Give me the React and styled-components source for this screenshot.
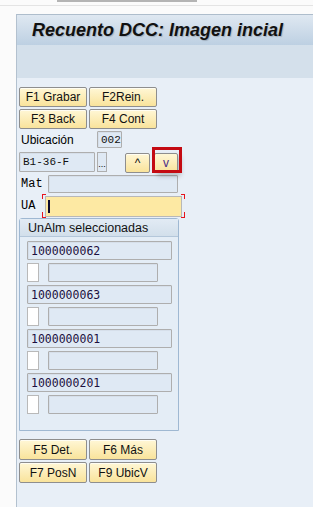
import styled, { createGlobalStyle } from "styled-components";

const GlobalStyle = createGlobalStyle`
    html, body {
        margin: 0;
        padding: 0;
        background: #fbfbfb;
    }
    #root {
        min-height: 100vh;
    }
`;

const Page = styled.div`
    display: flex;
    flex-direction: column;
    height: 507px;
    font-family: "Liberation Sans", Arial, sans-serif;
    font-size: 12px;
    color: #000;
`;

const TopStrip = styled.div`
    height: 14px;
    flex-shrink: 0;
`;

const Thumb = styled.div`
    margin-left: 57px;
    width: 140px;
    height: 2px;
    background: #b4b4b4;
`;

const TopLine = styled.div`
    margin-top: 3px;
    height: 1px;
    background: #e4e4e4;
`;

const Panel = styled.div`
    flex: 1;
    margin-left: 16px;
    border-left: 1px solid #b3c1cf;
    border-top: 1px solid #aebdcc;
    background: #e8eff7;
    display: flex;
    flex-direction: column;
`;

const Header = styled.div`
    height: 30px;
    display: flex;
    align-items: center;
    padding-left: 15px;
    background: linear-gradient(#dfe8f1, #bdd0e2);
`;

const Title = styled.h1`
    margin: 0;
    font-size: 18px;
    font-weight: bold;
    font-style: italic;
    color: #111;
    text-shadow: 1px 1px 1px rgba(0, 0, 0, 0.18);
`;

const Band = styled.div`
    height: 33px;
    background: #d4e0eb;
`;

const Content = styled.div`
    padding: 9px 0 0 2px;
    display: flex;
    flex-direction: column;
`;

const ButtonGrid = styled.div`
    display: grid;
    grid-template-columns: 68px 68px;
    gap: 2px;
    margin-top: ${(p) => p.$top || 0}px;
`;

const Key = styled.button`
    box-sizing: border-box;
    height: ${(p) => p.$h || "20px"};
    padding: 0;
    border: 1px solid #8e8e8e;
    border-radius: 2px;
    background: linear-gradient(#fff7d6, #f9e39b);
    font-family: "Liberation Sans", Arial, sans-serif;
    font-size: 12px;
    color: #111;
    box-shadow: inset 0 1px 0 #fffdf2;
    cursor: pointer;
`;

const Row = styled.div`
    display: flex;
    align-items: center;
    height: ${(p) => p.$h || 20}px;
    margin-top: ${(p) => p.$top || 0}px;
`;

const Label = styled.span`
    width: ${(p) => p.$w}px;
    padding-left: 2px;
    box-sizing: border-box;
    font-family: ${(p) =>
        p.$mono ? '"Liberation Mono", "Courier New", monospace' : '"Liberation Sans", Arial, sans-serif'};
    font-size: 12px;
    flex-shrink: 0;
`;

const Field = styled.div`
    box-sizing: border-box;
    width: ${(p) => p.$w}px;
    height: ${(p) => p.$h || 20}px;
    margin-left: ${(p) => p.$ml || 0}px;
    border: 1px solid #aeaeae;
    border-radius: 1px;
    background: #dfe9f4;
    box-shadow: inset 1px 1px 0 rgba(0, 0, 0, 0.04);
    padding-left: 3px;
    display: flex;
    align-items: center;
    font-family: ${(p) =>
        p.$sans ? '"DejaVu Sans Mono", monospace' : '"Liberation Mono", "Courier New", monospace'};
    font-size: ${(p) => (p.$sans ? "11.5px" : "11px")};
    color: ${(p) => (p.$sans ? "#1c1040" : "#111")};
    flex-shrink: 0;
`;

const Ellipsis = styled.div`
    box-sizing: border-box;
    width: 10px;
    height: 20px;
    margin-left: 2px;
    border: 1px solid #aeaeae;
    background: #dfe9f4;
    display: flex;
    align-items: flex-end;
    justify-content: center;
    font-size: 9px;
    line-height: 14px;
`;

const ArrowKey = styled(Key)`
    width: 25px;
    height: 20px;
    margin-left: ${(p) => p.$ml}px;
    margin-top: 1px;
    position: relative;

    ${(p) =>
        p.$focused &&
        `
        width: 24px;
        color: #4a2c86;
        box-shadow: 3px 3px 5px rgba(0, 0, 0, 0.22);
        &::after {
            content: "";
            position: absolute;
            left: -3px;
            top: -7px;
            right: -5px;
            bottom: -1px;
            border: 3px solid #c40a12;
            pointer-events: none;
        }
    `}
`;

const InputWrap = styled.div`
    position: relative;
    margin-left: 4px;
    padding: 2px 3px 1px 3px;

    &::before {
        content: "";
        position: absolute;
        inset: 0;
        pointer-events: none;
        background:
            linear-gradient(#e8141c, #e8141c) left top / 1px 5px no-repeat,
            linear-gradient(#e8141c, #e8141c) left top / 4px 1px no-repeat,
            linear-gradient(#e8141c, #e8141c) right top / 1px 5px no-repeat,
            linear-gradient(#e8141c, #e8141c) right top / 4px 1px no-repeat,
            linear-gradient(#e8141c, #e8141c) left bottom / 1px 6px no-repeat,
            linear-gradient(#e8141c, #e8141c) left bottom / 4px 1px no-repeat,
            linear-gradient(#e8141c, #e8141c) right bottom / 1px 6px no-repeat,
            linear-gradient(#e8141c, #e8141c) right bottom / 4px 1px no-repeat;
    }
`;

const YellowInput = styled.div`
    box-sizing: border-box;
    width: 137px;
    height: 21px;
    border: 1px solid #b8b8b8;
    background: #fde9a3;
    display: flex;
    align-items: center;
    padding-left: 2px;
`;

const Caret = styled.span`
    width: 2px;
    height: 13px;
    background: #0a0a30;
`;

const Group = styled.section`
    box-sizing: border-box;
    width: 160px;
    padding: 0 0 16px 0;
    border: 1px solid #9fb8d2;
    border-radius: 3px 3px 0 0;
    background: #e4edf6;
`;

const GroupTitle = styled.div`
    height: 17px;
    padding-left: 8px;
    display: flex;
    align-items: center;
    background: linear-gradient(#e2ebf4, #d2dfeb);
    border-bottom: 1px solid #b4c7da;
    font-size: 12.5px;
    color: #111;
`;

const GroupBody = styled.div`
    padding: 4px 0 0 7px;
    display: flex;
    flex-direction: column;
    gap: 3px;
`;

const Entry = styled.div`
    display: flex;
    flex-direction: column;
    gap: 3px;
`;

const EntryRow = styled.div`
    display: flex;
    align-items: center;
    height: 19px;
`;

const Check = styled.div`
    box-sizing: border-box;
    width: 12px;
    height: 19px;
    border: 1px solid #b9b9b9;
    background: #fff;
`;

const units = ["1000000062", "1000000063", "1000000001", "1000000201"];

const App = () => {
    return (
        <>
            <GlobalStyle />
            <Page>
                <TopStrip>
                    <Thumb />
                    <TopLine />
                </TopStrip>
                <Panel>
                    <Header>
                        <Title>Recuento DCC: Imagen incial</Title>
                    </Header>
                    <Band />
                    <Content>
                        <ButtonGrid>
                            <Key>F1 Grabar</Key>
                            <Key>F2Rein.</Key>
                            <Key>F3 Back</Key>
                            <Key>F4 Cont</Key>
                        </ButtonGrid>

                        <Row $h={17} $top={2}>
                            <Label $w={78}>Ubicación</Label>
                            <Field $w={25} $h={17}>002</Field>
                        </Row>

                        <Row $h={22} $top={3}>
                            <Field $w={76}>B1-36-F</Field>
                            <Ellipsis>...</Ellipsis>
                            <ArrowKey $ml={18}>^</ArrowKey>
                            <ArrowKey $ml={4} $focused>v</ArrowKey>
                        </Row>

                        <Row $h={18} $top={2}>
                            <Label $w={29} $mono>Mat</Label>
                            <Field $w={130} $h={18} />
                        </Row>

                        <Row $h={24} $top={1}>
                            <Label $w={19} $mono>UA</Label>
                            <InputWrap>
                                <YellowInput>
                                    <Caret />
                                </YellowInput>
                            </InputWrap>
                        </Row>

                        <Group>
                            <GroupTitle>UnAlm seleccionadas</GroupTitle>
                            <GroupBody>
                                {units.map((u) => (
                                    <Entry key={u}>
                                        <EntryRow>
                                            <Field $w={145} $h={19} $sans>
                                                {u}
                                            </Field>
                                        </EntryRow>
                                        <EntryRow>
                                            <Check />
                                            <Field $w={110} $h={19} $ml={9} />
                                        </EntryRow>
                                    </Entry>
                                ))}
                            </GroupBody>
                        </Group>

                        <ButtonGrid $top={8}>
                            <Key $h="21px">F5 Det.</Key>
                            <Key $h="21px">F6 Más</Key>
                            <Key $h="21px">F7 PosN</Key>
                            <Key $h="21px">F9 UbicV</Key>
                        </ButtonGrid>
                    </Content>
                </Panel>
            </Page>
        </>
    );
};

export default App;
